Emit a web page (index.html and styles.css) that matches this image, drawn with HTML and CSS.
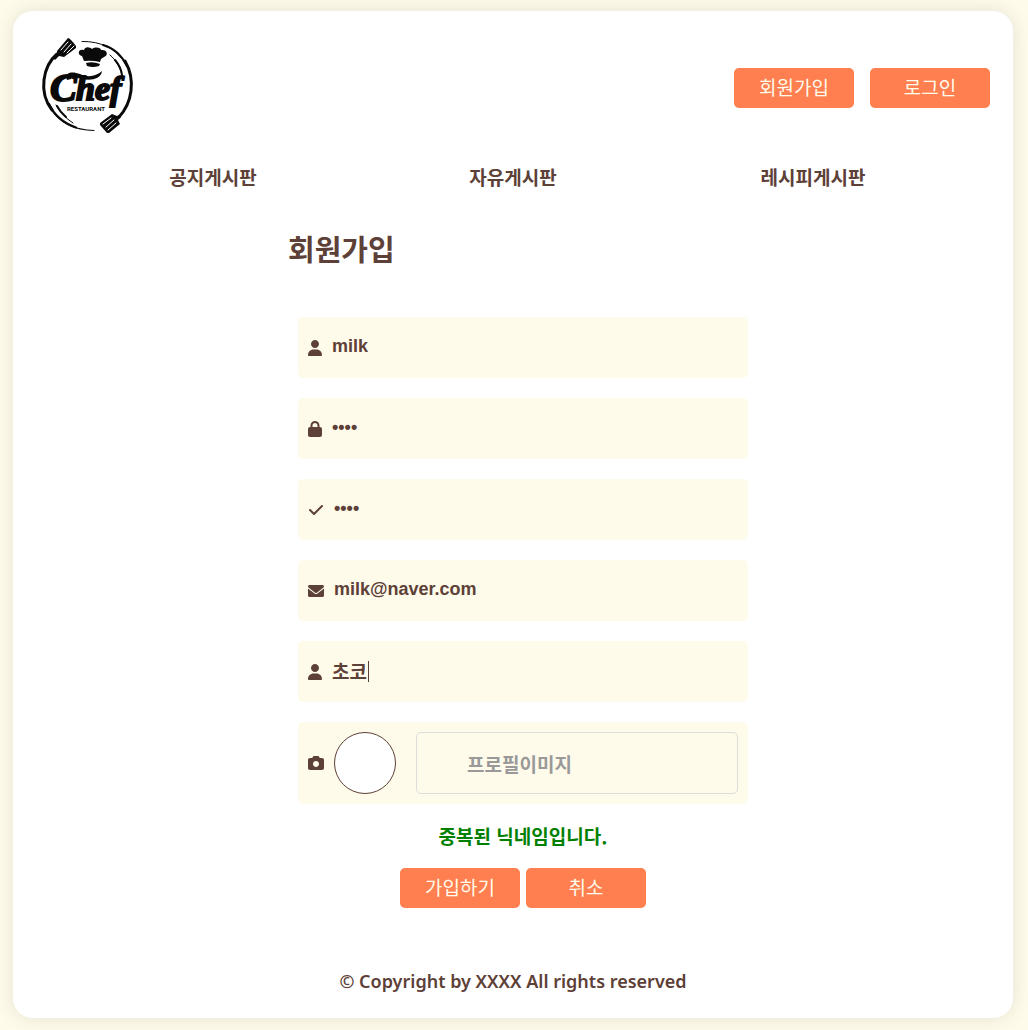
FILE: index.html
```html
<!DOCTYPE html>
<html lang="ko">
<head>
<meta charset="utf-8">
<meta name="viewport" content="width=device-width, initial-scale=1">
<title>회원가입</title>
<link rel="stylesheet" href="styles.css">
</head>
<body>
<div class="card">
  <header class="header">
    <a class="logo" href="#" aria-label="Chef Restaurant">
      <svg viewBox="36 32 104 106" width="104" height="106">
        <g fill="none" stroke="#0a0a0a" stroke-linecap="round">
          <path d="M57 54C43 66 38 92 52 110" stroke-width="3"/>
          <path d="M51 109C60 123 74 130 94 130.500" stroke-width="1.200"/>
          <path d="M49 104C54 115 63 123 76 127.500" stroke-width="2.200"/>
          <path d="M82 41.500C101 41 117 49 125 63" stroke-width="1"/>
          <path d="M103 45C114 48 122 56 127 66" stroke-width="2"/>
          <path d="M125 61C136 80 132 103 119 117" stroke-width="3"/>
          <path d="M110 55C116 60 120 67 122 75" stroke-width="1"/>
          <path d="M115 60Q121 67 122 75" stroke-width="2"/>
          <path d="M56 105Q62 116 73 123" stroke-width="1"/>
          <path d="M57 106Q60 112 66 117" stroke-width="2"/>
        </g>
        <g fill="#0a0a0a">
          <path d="M57 51L68 38Q70 38 76 46V48L64 57L59 56L55 60L53 58L57 54Z"/>
          <path d="M119 115L121 117L118 120L120 124L109 133L107 133L100 125V123L112 114L117 116Z"/>
          <path d="M84 61L82 56C77 55 78 48 84 50C85 46 90 47 92 49C96 46 101 48 101 50C107 49 109 55 104 57L101 59L100 62Q92 60 84 61Z"/>
          <path d="M86 63Q93 61 100 64L99 66Q93 68 87 66Z"/>
        </g>
        <g fill="none" stroke="#fff" stroke-width="1" stroke-linecap="round">
          <path d="M61 50L68 42M64 52L71 44M67 53L74 46M103 124L111 118M106 127L114 120M108 130L116 123"/>
        </g>
        <text class="logo-name" x="50" y="101"><tspan class="initial">C</tspan><tspan x="76" y="100">hef</tspan></text>
        <path d="M67 80C64 72 72 71 80 74C89 78 96 76 102 71C101 79 91 81 82 79C75 77 71 76 71 79Z" fill="#0a0a0a"/>
        <text class="logo-sub" x="67" y="111">RESTAURANT</text>
      </svg>
    </a>
    <div class="account">
      <button class="btn" type="button">회원가입</button>
      <button class="btn" type="button">로그인</button>
    </div>
  </header>
  <nav class="nav">
    <a href="#">공지게시판</a>
    <a href="#">자유게시판</a>
    <a href="#">레시피게시판</a>
  </nav>
  <main class="signup">
    <h1>회원가입</h1>
    <form class="form">
      <div class="field">
        <label for="userid" aria-label="아이디"><svg class="icon narrow" viewBox="0 0 448 512"><path d="M224 256c70.700 0 128-57.310 128-128s-57.300-128-128-128C153.300 0 96 57.310 96 128S153.300 256 224 256zM274.700 304H173.300C77.610 304 0 381.600 0 477.300c0 19.140 15.520 34.670 34.660 34.670h378.700C432.500 512 448 496.500 448 477.300C448 381.600 370.400 304 274.700 304z"/></svg></label>
        <input id="userid" type="text" value="milk">
      </div>
      <div class="field">
        <label for="pw" aria-label="비밀번호"><svg class="icon narrow" viewBox="0 0 448 512"><path d="M80 192V144C80 64.470 144.500 0 224 0C303.500 0 368 64.470 368 144V192H384C419.300 192 448 220.700 448 256V448C448 483.300 419.300 512 384 512H64C28.650 512 0 483.300 0 448V256C0 220.700 28.650 192 64 192H80zM144 192H304V144C304 99.820 268.200 64 224 64C179.800 64 144 99.820 144 144V192z"/></svg></label>
        <input id="pw" type="password" value="milk">
      </div>
      <div class="field">
        <label for="pw2" aria-label="비밀번호 확인"><svg class="icon" viewBox="0 0 512 512"><path d="M480 128c0 8.188-3.125 16.380-9.375 22.620l-256 256C208.400 412.900 200.200 416 192 416s-16.380-3.125-22.620-9.375l-128-128C35.130 272.400 32 264.200 32 256c0-18.280 14.950-32 32-32c8.188 0 16.380 3.125 22.620 9.375L192 338.800l233.400-233.400C431.600 99.130 439.800 96 448 96C465.100 96 480 109.700 480 128z"/></svg></label>
        <input id="pw2" type="password" value="milk">
      </div>
      <div class="field">
        <label for="email" aria-label="이메일"><svg class="icon" viewBox="0 0 512 512"><path d="M256 352c-16.530 0-33.060-5.422-47.160-16.410L0 173.200V400C0 426.500 21.490 448 48 448h416c26.510 0 48-21.490 48-48V173.200l-208.800 162.500C289.100 346.600 272.500 352 256 352zM16.290 145.300l212.200 165.100c16.190 12.600 38.870 12.600 55.060 0l212.200-165.100C505.100 137.300 512 125 512 112C512 85.490 490.500 64 464 64h-416C21.490 64 0 85.490 0 112C0 125 6.010 137.300 16.290 145.300z"/></svg></label>
        <input id="email" type="email" value="milk@naver.com">
      </div>
      <div class="field">
        <label for="nick" aria-label="닉네임"><svg class="icon narrow" viewBox="0 0 448 512"><path d="M224 256c70.700 0 128-57.310 128-128s-57.300-128-128-128C153.300 0 96 57.310 96 128S153.300 256 224 256zM274.700 304H173.300C77.610 304 0 381.600 0 477.300c0 19.140 15.520 34.670 34.660 34.670h378.700C432.500 512 448 496.500 448 477.300C448 381.600 370.400 304 274.700 304z"/></svg></label>
        <input id="nick" class="korean" type="text" value="초코">
        <span class="caret"></span>
      </div>
      <div class="field">
        <label for="profile" aria-label="프로필이미지"><svg class="icon" viewBox="0 0 512 512"><path d="M194.600 32H317.400C338.100 32 356.400 45.220 362.900 64.820L373.300 96H448C483.300 96 512 124.700 512 160V416C512 451.300 483.300 480 448 480H64C28.650 480 0 451.300 0 416V160C0 124.700 28.650 96 64 96H138.700L149.100 64.820C155.600 45.220 173.900 32 194.600 32zM256 384C309 384 352 341 352 288C352 234.100 309 192 256 192C202.100 192 160 234.100 160 288C160 341 202.100 384 256 384z"/></svg></label>
        <span class="avatar"></span>
        <input id="profile" class="korean profile" type="text" placeholder="프로필이미지">
      </div>
      <p class="message">중복된 닉네임입니다.</p>
      <div class="actions">
        <button class="btn" type="submit">가입하기</button>
        <button class="btn" type="reset">취소</button>
      </div>
    </form>
  </main>
  <footer class="footer">© Copyright by XXXX All rights reserved</footer>
</div>
</body>
</html>
```
FILE: styles.css
```css
* {
  box-sizing: border-box;
}

body {
  margin: 0;
  padding: 11px 15px 12px 13px;
  background: #fffbeb;
  color: #5d4037;
  font-family: "Noto Sans CJK KR", sans-serif;
  font-size: 19px;
  line-height: 28px;
  font-weight: 700;
}

.card {
  max-width: 1000px;
  margin: 0 auto;
  padding-bottom: 23px;
  background: #fff;
  border-radius: 20px;
  box-shadow: 0 0 20px rgba(0, 0, 0, 0.1);
}

.header {
  display: flex;
  justify-content: space-between;
  align-items: flex-start;
  padding: 21px 23px 0;
}

.logo svg {
  display: block;
}

.logo-name {
  font: italic 700 34px "Liberation Serif", serif;
  fill: #0a0a0a;
  stroke: #0a0a0a;
  stroke-width: 2px;
}

.logo-name .initial {
  font-size: 40px;
}

.logo-sub {
  font: 700 6px Roboto, sans-serif;
  fill: #0a0a0a;
}

.account {
  display: flex;
  gap: 16px;
  padding-top: 36px;
}

.btn {
  width: 120px;
  height: 40px;
  padding: 0 0 2px;
  border: 0;
  border-radius: 5px;
  background: #ff7f50;
  color: #fffbeb;
  font: 400 19px/28px "Noto Sans CJK KR", sans-serif;
}

.nav {
  display: grid;
  grid-template-columns: repeat(3, 1fr);
  margin: 0 50px;
  padding-top: 25px;
  text-align: center;
}

.nav a {
  color: inherit;
  text-decoration: none;
}

.signup {
  max-width: 450px;
  margin: 0 auto;
}

h1 {
  margin: 37px 0 49px;
  font-size: 29px;
  line-height: 40px;
}

.form {
  display: grid;
  grid-template-columns: minmax(0, 1fr);
  gap: 20px;
  margin: 0 -10px 0 10px;
}

.field {
  position: relative;
  display: flex;
  align-items: center;
  gap: 10px;
  min-height: 61px;
  padding: 10px;
  border-radius: 5px;
  background: #fffbeb;
}

.field label {
  display: flex;
}

.icon {
  width: 16px;
  height: 16px;
  fill: #5d4037;
}

.icon.narrow {
  width: 14px;
}

.field input {
  flex: 1;
  min-width: 0;
  height: 40px;
  padding: 0 0 2px;
  border: 0;
  outline: 0;
  background: transparent;
  color: #5d4037;
  font: 700 18px "Liberation Sans", sans-serif;
}

.field .korean {
  font: 700 19px "Noto Sans CJK KR", sans-serif;
}

.caret {
  position: absolute;
  left: 70px;
  top: 20px;
  width: 1px;
  height: 21px;
  background: #5d4037;
}

.avatar {
  width: 62px;
  height: 62px;
  border: 1px solid #5d4037;
  border-radius: 50%;
  background: #fff;
}

.field .profile {
  height: 62px;
  margin-left: 10px;
  padding: 0 50px;
  border: 1px solid #ddd;
  border-radius: 5px;
}

.profile::placeholder {
  color: #999;
  opacity: 1;
}

.message {
  margin: 0;
  color: #008000;
  line-height: 24px;
  text-align: center;
}

.actions {
  display: flex;
  justify-content: center;
  gap: 6px;
}

.footer {
  padding-top: 59px;
  font-family: "Noto Sans", "Noto Sans CJK KR", sans-serif;
  font-size: 18px;
  font-weight: 600;
  text-align: center;
}
```
